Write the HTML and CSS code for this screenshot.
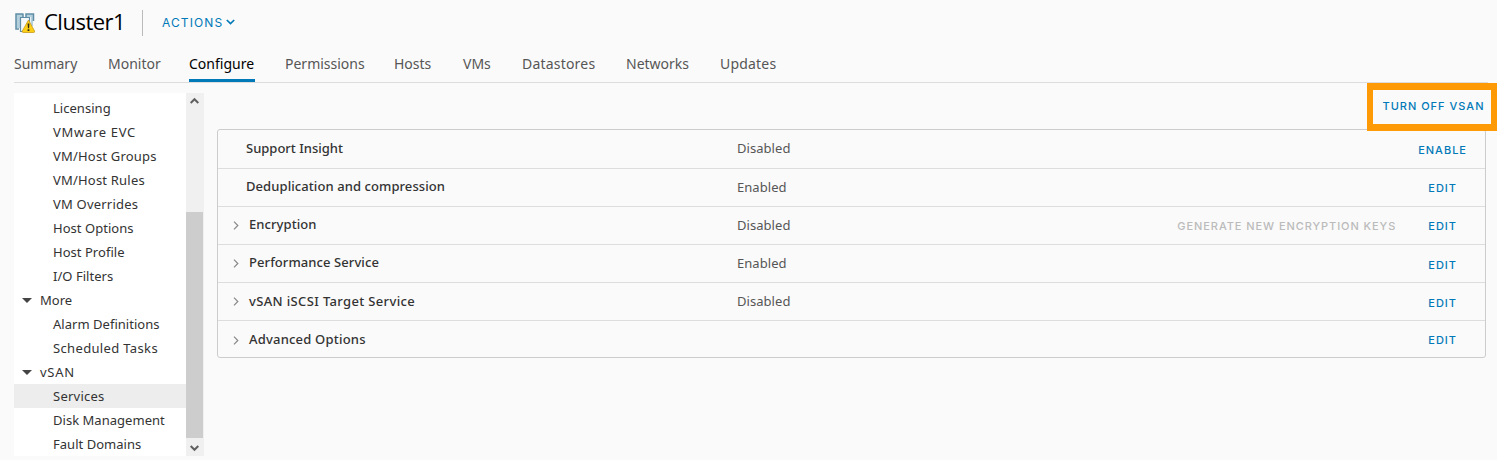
FILE: index.html
```html
<!DOCTYPE html>
<html lang="en">
<head>
<meta charset="utf-8">
<title>Cluster1 - Configure</title>
<link rel="stylesheet" href="styles.css">
</head>
<body>
<header class="header">
  <svg class="cluster-icon" width="20" height="21" viewBox="0 0 20 21">
    <path d="M1 1h7v3H5v11H1zM11 1h7v12h-2V4h-5z" fill="#b5d0dd"/>
    <path d="M8.500 1H1v15h3M8 1v3M11 4V1h7.500v7" fill="none" stroke="#5f8da5" stroke-width="1.500"/>
    <path d="M5.500 4.500h9v14h-9z" fill="#f4f8fa" stroke="#5f8da5" stroke-width="1.200"/>
    <path d="M13.500 7 7.300 18q-.5 1.500.9 1.500h10.400q1.400 0 .9-1.500z" fill="#fccf16" stroke="#c79b1b" stroke-width=".8"/>
    <path d="M12.600 10.500h1.800l-.3 4.700h-1.200z M12.600 16.300h1.800v1.600h-1.800z" fill="#332c12"/>
  </svg>
  <h1 class="title">Cluster1</h1>
  <button class="actions">ACTIONS<svg width="9" height="6" viewBox="0 0 9 6"><path d="M.8 1 4.500 4.500 8.200 1" fill="none" stroke="#0079b8" stroke-width="1.700"/></svg></button>
</header>
<nav class="tabs">
  <a class="tab">Summary</a><a class="tab">Monitor</a><a class="tab tab-active">Configure</a><a class="tab">Permissions</a><a class="tab">Hosts</a><a class="tab">VMs</a><a class="tab wide">Datastores</a><a class="tab">Networks</a><a class="tab wide">Updates</a>
</nav>
<main class="content">
  <aside class="sidebar">
    <ul class="menu">
      <li>Licensing</li><li class="widest">VMware EVC</li><li class="wide">VM/Host Groups</li><li class="wide">VM/Host Rules</li><li class="wide">VM Overrides</li><li>Host Options</li><li>Host Profile</li><li>I/O Filters</li>
      <li class="group">More</li><li>Alarm Definitions</li><li class="wider">Scheduled Tasks</li>
      <li class="group widest">vSAN</li><li class="selected">Services</li><li>Disk Management</li><li>Fault Domains</li>
    </ul>
    <div class="scrollbar">
      <svg width="17" height="18" viewBox="0 0 17 18"><path d="M4.700 10 8.500 6.200l3.800 3.800" fill="none" stroke="#606060" stroke-width="2"/></svg>
      <div class="thumb"></div>
      <svg width="17" height="18" viewBox="0 0 17 18"><path d="M4.700 8 8.500 11.800 12.300 8" fill="none" stroke="#606060" stroke-width="2"/></svg>
    </div>
  </aside>
  <section class="panel">
    <div class="toolbar"><button class="link turn-off">TURN OFF VSAN</button></div>
    <div class="services">
      <div class="row plain"><span class="name">Support Insight</span><span class="status raised">Disabled</span><button class="link enable lowered">ENABLE</button></div>
      <div class="row plain"><span class="name loose">Deduplication and compression</span><span class="status">Enabled</span><button class="link">EDIT</button></div>
      <div class="row"><svg class="caret" width="6" height="9" viewBox="0 0 6 9"><path d="M1 .7 4.800 4.500 1 8.300" /></svg><span class="name loose">Encryption</span><span class="status">Disabled</span><button class="link disabled">GENERATE NEW ENCRYPTION KEYS</button><button class="link">EDIT</button></div>
      <div class="row"><svg class="caret" width="6" height="9" viewBox="0 0 6 9"><path d="M1 .7 4.800 4.500 1 8.300" /></svg><span class="name loose">Performance Service</span><span class="status">Enabled</span><button class="link lowered">EDIT</button></div>
      <div class="row"><svg class="caret" width="6" height="9" viewBox="0 0 6 9"><path d="M1 .7 4.800 4.500 1 8.300" /></svg><span class="name centered wider">vSAN iSCSI Target Service</span><span class="status">Disabled</span><button class="link lowered">EDIT</button></div>
      <div class="row"><svg class="caret" width="6" height="9" viewBox="0 0 6 9"><path d="M1 .7 4.800 4.500 1 8.300" /></svg><span class="name wide">Advanced Options</span><span class="status"></span><button class="link">EDIT</button></div>
    </div>
  </section>
</main>
</body>
</html>
```
FILE: styles.css
```css
* { box-sizing: border-box; }
body {
  margin: 0;
  width: 1497px;
  height: 460px;
  overflow: hidden;
  background: #fafafa;
  color: #333;
  font-family: "Noto Sans", "Open Sans", sans-serif;
  font-size: 13px;
}
button { border: 0; padding: 0; background: none; font-family: Inter, sans-serif; color: #0079b8; white-space: nowrap; }
.header { display: flex; height: 46px; padding-left: 15px; align-items: center; }
.cluster-icon { flex: none; margin-right: 9px; }
.title { margin: 0; width: 99px; height: 26px; border-right: 1px solid #bbb; color: #000; font-size: 22px; font-weight: 400; line-height: 23px; font-family: "Open Sans", sans-serif; letter-spacing: -0.5px; }
.actions { display: flex; align-items: center; gap: 3px; margin: -2px 0 0 19px; font-size: 12px; letter-spacing: 1.1px; }
.tabs {
  display: grid;
  grid-template-columns: 64px 51px 66px 79px 39px 29px 74px 64px 57px;
  column-gap: 30px;
  height: 37px;
  margin: 0 9px 0 14px;
  border-bottom: 1px solid #ddd;
}
.tab { height: 36px; color: #565656; font-size: 14px; line-height: 36px; white-space: nowrap; }
.tab-active { color: #000; border-bottom: 3px solid #0079b8; }
.content { display: flex; height: 377px; }
.sidebar { display: flex; width: 190px; height: 363px; margin: 10px 0 0 14px; background: #fff; }
.menu { flex: 1; margin: 0; padding: 3px 0 0; list-style: none; overflow: hidden; }
.menu li { height: 24px; padding-left: 39px; line-height: 24px; white-space: nowrap; letter-spacing: 0.03px; }
.menu .group { display: flex; align-items: center; gap: 8px; padding-left: 8px; }
.group::before { content: ""; border: 5px solid transparent; border-top-color: #444; border-bottom: 0; }
.menu .selected { background: #ededed; letter-spacing: 0.25px; }
.wide, .menu .wide { letter-spacing: 0.2px; }
.wider, .menu .wider { letter-spacing: 0.35px; }
.menu .widest { letter-spacing: 0.7px; }
.scrollbar { display: flex; flex-direction: column; justify-content: space-between; width: 18px; background: #f0f0f0; }
.thumb { width: 17px; height: 226px; margin-top: 101px; background: #cdcdcd; }
.panel { flex: 1; padding-left: 13px; }
.toolbar { display: flex; justify-content: flex-end; height: 46px; }
.turn-off { width: 130px; height: 48px; padding: 0 0 2px 3px; border: 6px solid #ff9a07; border-top-width: 7px; border-bottom-width: 7px; z-index: 1; position: relative; }
.link { font-size: 11px; font-weight: 500; letter-spacing: 1px; line-height: 14px; }
.services { width: 1269px; height: 229px; border: 1px solid #ccc; border-radius: 3px; }
.row { display: flex; align-items: center; height: 38px; border-bottom: 1px solid #ddd; padding: 0 28px 0 15px; }
.row:first-child { height: 39px; }
.row:last-child { border-bottom: 0; }
.plain { padding-left: 28px; }
.caret { flex: none; margin: 0 10px 0 0; fill: none; stroke: #888; stroke-width: 1.2; }
.name { width: 488px; padding-bottom: 3px; font-weight: 500; }
.plain .name { width: 491px; }
.name.centered { padding-bottom: 1px; }
.loose { letter-spacing: 0.08px; }
.status { flex: 1; padding-bottom: 1px; color: #565656; letter-spacing: 0.05px; }
.status.raised { padding-bottom: 3px; }
.link.disabled { color: #bbb; margin-right: 32px; letter-spacing: 0.93px; }
.enable { margin-right: -10px; }
.lowered { padding-top: 2px; }
```
